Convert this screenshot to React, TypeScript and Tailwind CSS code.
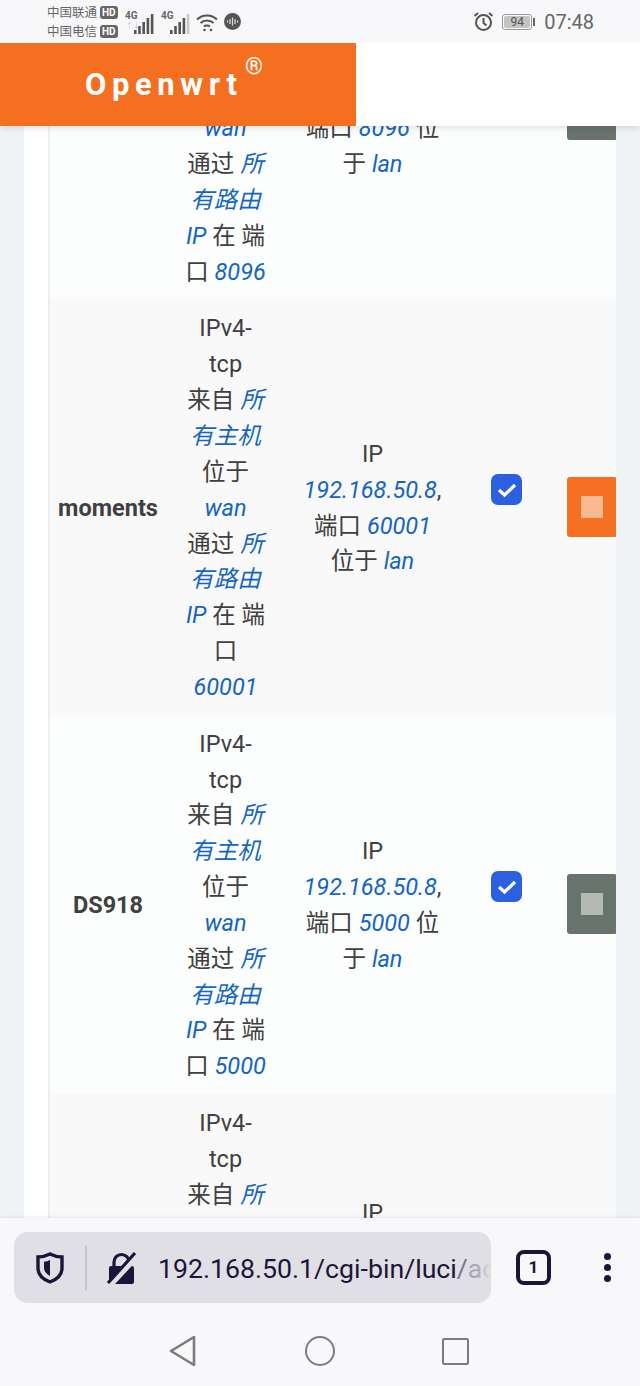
import React from "react";

const FONT = { fontFamily: '"Roboto","Noto Sans CJK SC",sans-serif' };

function L({ children }: { children: React.ReactNode }) {
  return <i className="italic text-[#1565c0]">{children}</i>;
}

function Signal({ off = 0 }: { off?: number }) {
  const hs = [4, 8, 12, 16, 20];
  return (
    <svg width="21" height="21" viewBox="0 0 21 21">
      {hs.map((h, i) => (
        <rect key={i} x={i * 4.2} y={21 - h} width="2.6" height={h} fill={i >= 5 - off ? "#c9c9c9" : "#555"} />
      ))}
    </svg>
  );
}

function StatusBar() {
  return (
    <div className="flex h-[43px] shrink-0 items-center bg-[#f8f8fa] pl-[47px] pr-[46px] text-[#666]">
      <div className="mt-[1px] flex w-[73px] flex-col gap-[3px] text-[12.500px] leading-[16px]">
        {["中国联通", "中国电信"].map((t) => (
          <div key={t} className="flex items-center gap-[3px] whitespace-nowrap">
            <span>{t}</span>
            <span className="rounded-[3px] bg-[#666] px-[2px] text-[10px] font-bold leading-[13px] text-white">HD</span>
          </div>
        ))}
      </div>
      <div className="ml-[5px] flex items-center">
        <div className="relative h-[24px] w-[30px]">
          <span className="absolute left-0 top-[1px] text-[10px] font-bold leading-[10px]">4G</span>
          <span className="absolute left-[1px] top-[12px] text-[7px] leading-[8px] text-[#bbb]">↑↓</span>
          <span className="absolute bottom-0 right-0"><Signal /></span>
        </div>
        <div className="relative ml-[6px] h-[24px] w-[30px]">
          <span className="absolute left-0 top-[1px] text-[10px] font-bold leading-[10px]">4G</span>
          <span className="absolute bottom-0 right-0"><Signal off={1} /></span>
        </div>
        <svg className="ml-[5px]" width="22" height="20" viewBox="0 0 22 20" fill="none" stroke="#555" strokeWidth="2">
          <path d="M1 7.500C6.500 2 15.500 2 21 7.500" />
          <path d="M4.500 11C8 7.500 14 7.500 17.500 11" />
          <path d="M8 14.500C9.500 13 12.500 13 14 14.500" />
          <circle cx="8.500" cy="18" r="1.300" fill="#555" stroke="none" />
          <circle cx="15" cy="18" r="1.300" fill="#555" stroke="none" />
        </svg>
        <svg className="ml-[6px]" width="17" height="17" viewBox="0 0 17 17">
          <circle cx="8.500" cy="8.500" r="8.500" fill="#555" />
          <path d="M3.500 7.500v2M6 6v5M8.500 4.500v8M11 6v5M13.500 7.500v2" stroke="#ddd" strokeWidth="1.200" />
        </svg>
      </div>
      <div className="ml-auto flex items-center">
        <svg width="21" height="21" viewBox="0 0 21 21" fill="none" stroke="#555" strokeWidth="2">
          <circle cx="10.500" cy="11.500" r="7.500" />
          <path d="M10.500 7v5l3 2.500" />
          <path d="M1.500 5L5 2M19.500 5L16 2" />
        </svg>
        <div className="ml-[8px] flex h-[16px] w-[30px] items-center rounded-[3px] border border-[#999] p-[1px]">
          <div className="flex h-full w-[26px] items-center justify-center rounded-[2px] bg-[#c4c4c4] text-[12px] leading-none text-[#555]">94</div>
        </div>
        <div className="ml-[1px] h-[8px] w-[2px] bg-[#666]" />
        <span className="ml-[9px] text-[20px] leading-none text-[#666]">07:48</span>
      </div>
    </div>
  );
}

function Row({
  name,
  odd,
  active,
  proto,
  target,
}: {
  name: string;
  odd?: boolean;
  active?: boolean;
  proto: React.ReactNode;
  target: React.ReactNode;
}) {
  return (
    <tr className={odd ? "bg-[#fbfefd]" : "bg-[#f9f9fa]"}>
      <td className="pb-[9px] pr-[3px] pt-[12px] text-center align-middle font-bold">{name}</td>
      <td className="pb-[9px] pr-[3px] pt-[12px] text-center align-middle">{proto}</td>
      <td className="pb-[9px] pr-[3px] pt-[12px] text-center align-middle">{target}</td>
      <td className="py-[10.500px] align-middle">
        <div className="mb-[35px] ml-[28px] flex h-[31px] w-[31px] items-center justify-center rounded-[7px] bg-[#2b61e0]">
          <svg width="22" height="18" viewBox="0 0 22 18" fill="none" stroke="#fff" strokeWidth="3.200">
            <path d="M3 9l5.500 5L19 4" />
          </svg>
        </div>
      </td>
      <td className="py-[10.500px] align-middle">
        <div className={`ml-[14px] flex h-[60px] w-[50px] items-center justify-center rounded-[3px] ${active ? "bg-[#f57020]" : "bg-[#68736d]"}`}>
          <div className="h-[22px] w-[22px] bg-white/50" />
        </div>
      </td>
    </tr>
  );
}

function proto(last: React.ReactNode) {
  return (
    <>
      IPv4-<br />tcp<br />来自 <L>所</L><br /><L>有主机</L><br />位于<br /><L>wan</L><br />通过 <L>所</L><br /><L>有路由</L><br /><L>IP</L> 在 端<br />
      {last}
    </>
  );
}

function Header() {
  return (
    <div className="absolute left-0 right-0 top-0 z-10 h-[83px] bg-white shadow-[0_2px_6px_rgba(0,0,0,0.12)]">
      <div className="flex h-full w-[356px] items-center bg-[#f56f20] pl-[85px] text-white">
        <span className="relative text-[31px] font-bold leading-none tracking-[5.600px]">
          Openwrt
          <span className="absolute left-[160px] top-[-14px] text-[23px] font-normal leading-none tracking-normal">®</span>
        </span>
      </div>
    </div>
  );
}

function Footer() {
  return (
    <div className="relative z-10 h-[168px] shrink-0 bg-[#f8f8fb] shadow-[0_-1px_3px_rgba(0,0,0,0.08)]">
      <div className="flex items-center pl-[14px] pt-[14px]">
        <div className="relative flex h-[71px] w-[477px] items-center overflow-hidden rounded-[14px] bg-[#e0dfe5]">
          <svg className="ml-[21px] shrink-0" width="30" height="34" viewBox="0 0 30 34" fill="none">
            <path d="M15 3c4 2 8 3 12 3v11c0 7-5 11.500-12 14C8 28.500 3 24 3 17V6c4 0 8-1 12-3z" stroke="#1d1539" strokeWidth="3.400" />
            <path d="M15 9c-2 1-4 1.500-6 1.800V17c0 3.500 2.500 6 6 8z" fill="#1d1539" />
          </svg>
          <div className="ml-[20px] h-[44px] w-[2px] shrink-0 bg-[#c5c4d0]" />
          <svg className="ml-[19px] shrink-0" width="32" height="36" viewBox="0 0 32 36">
            <path d="M8 17v-5a7.500 7.500 0 0 1 15 0v5" fill="none" stroke="#1d1539" strokeWidth="3.200" />
            <rect x="3" y="16" width="25" height="18" rx="2" fill="#1d1539" />
            <path d="M4 35L31 6" stroke="#e0dfe5" strokeWidth="6" />
            <path d="M2 33L29 3" stroke="#1d1539" strokeWidth="3.200" />
          </svg>
          <span className="ml-[20px] mt-[3px] whitespace-nowrap text-[26.700px] leading-none text-[#1d1539]">
            192.168.50.1/cgi-bin/luci<span className="text-[#77768a]">/</span><span className="text-[#a9a8b0]">admin</span>
          </span>
          <div className="absolute bottom-0 right-0 top-0 w-[14px] bg-gradient-to-l from-[#e0dfe5] to-transparent" />
        </div>
        <div className="ml-[25px] flex h-[35px] w-[35px] items-center justify-center rounded-[8px] border-[4px] border-[#1d1539] text-[17px] font-bold text-[#1d1539]">1</div>
        <div className="ml-[53px] flex flex-col gap-[4px]">
          <div className="h-[7px] w-[7px] rounded-full bg-[#1d1539]" />
          <div className="h-[7px] w-[7px] rounded-full bg-[#1d1539]" />
          <div className="h-[7px] w-[7px] rounded-full bg-[#1d1539]" />
        </div>
      </div>
      <div className="mt-[31px] flex items-center justify-center gap-[107px] pr-[4px]">
        <svg width="30" height="34" viewBox="0 0 30 34" fill="none" stroke="#7c7c7c" strokeWidth="2.600" strokeLinejoin="round">
          <path d="M26 3v28L3 17z" />
        </svg>
        <div className="h-[30px] w-[30px] rounded-full border-[2.600px] border-[#7c7c7c]" />
        <div className="h-[27px] w-[27px] rounded-[2px] border-[2.600px] border-[#7c7c7c]" />
      </div>
    </div>
  );
}

export default function App() {
  return (
    <div style={FONT} className="flex h-[1386px] w-[640px] flex-col overflow-hidden bg-[#f0f3f6] text-[23.500px] leading-[35.840px] text-[#404040]">
      <StatusBar />
      <div className="relative min-h-0 flex-1 overflow-hidden">
        <Header />
        <div className="ml-[24px] mt-[-123px] w-[592px] overflow-hidden bg-white pl-[24px]">
          <table className="w-[568px] table-fixed border-collapse border-l-2 border-[#eeeeee]">
            <colgroup>
              <col className="w-[120px]" />
              <col className="w-[116px]" />
              <col className="w-[178px]" />
              <col className="w-[90px]" />
              <col className="w-[64px]" />
            </colgroup>
            <tbody>
              <Row
                name=""
                odd
                proto={proto(<>口 <L>8096</L></>)}
                target={<>IP<br /><L>192.168.50.8</L>,<br />端口 <L>8096</L> 位<br />于 <L>lan</L></>}
              />
              <Row
                name="moments"
                active
                proto={proto(<>口<br /><L>60001</L></>)}
                target={<>IP<br /><L>192.168.50.8</L>,<br />端口 <L>60001</L><br />位于 <L>lan</L></>}
              />
              <Row
                name="DS918"
                odd
                proto={proto(<>口 <L>5000</L></>)}
                target={<>IP<br /><L>192.168.50.8</L>,<br />端口 <L>5000</L> 位<br />于 <L>lan</L></>}
              />
              <Row
                name=""
                proto={<>IPv4-<br />tcp<br />来自 <L>所</L><br /><L>有主机</L><br />位于<br /><L>wan</L><br />通过 <L>所</L><br /><L>有路由</L><br /><L>IP</L> 在</>}
                target={<>IP<br /><L>192.168.50.8</L>,<br />端口<br />位于 <L>lan</L></>}
              />
            </tbody>
          </table>
        </div>
      </div>
      <Footer />
    </div>
  );
}
